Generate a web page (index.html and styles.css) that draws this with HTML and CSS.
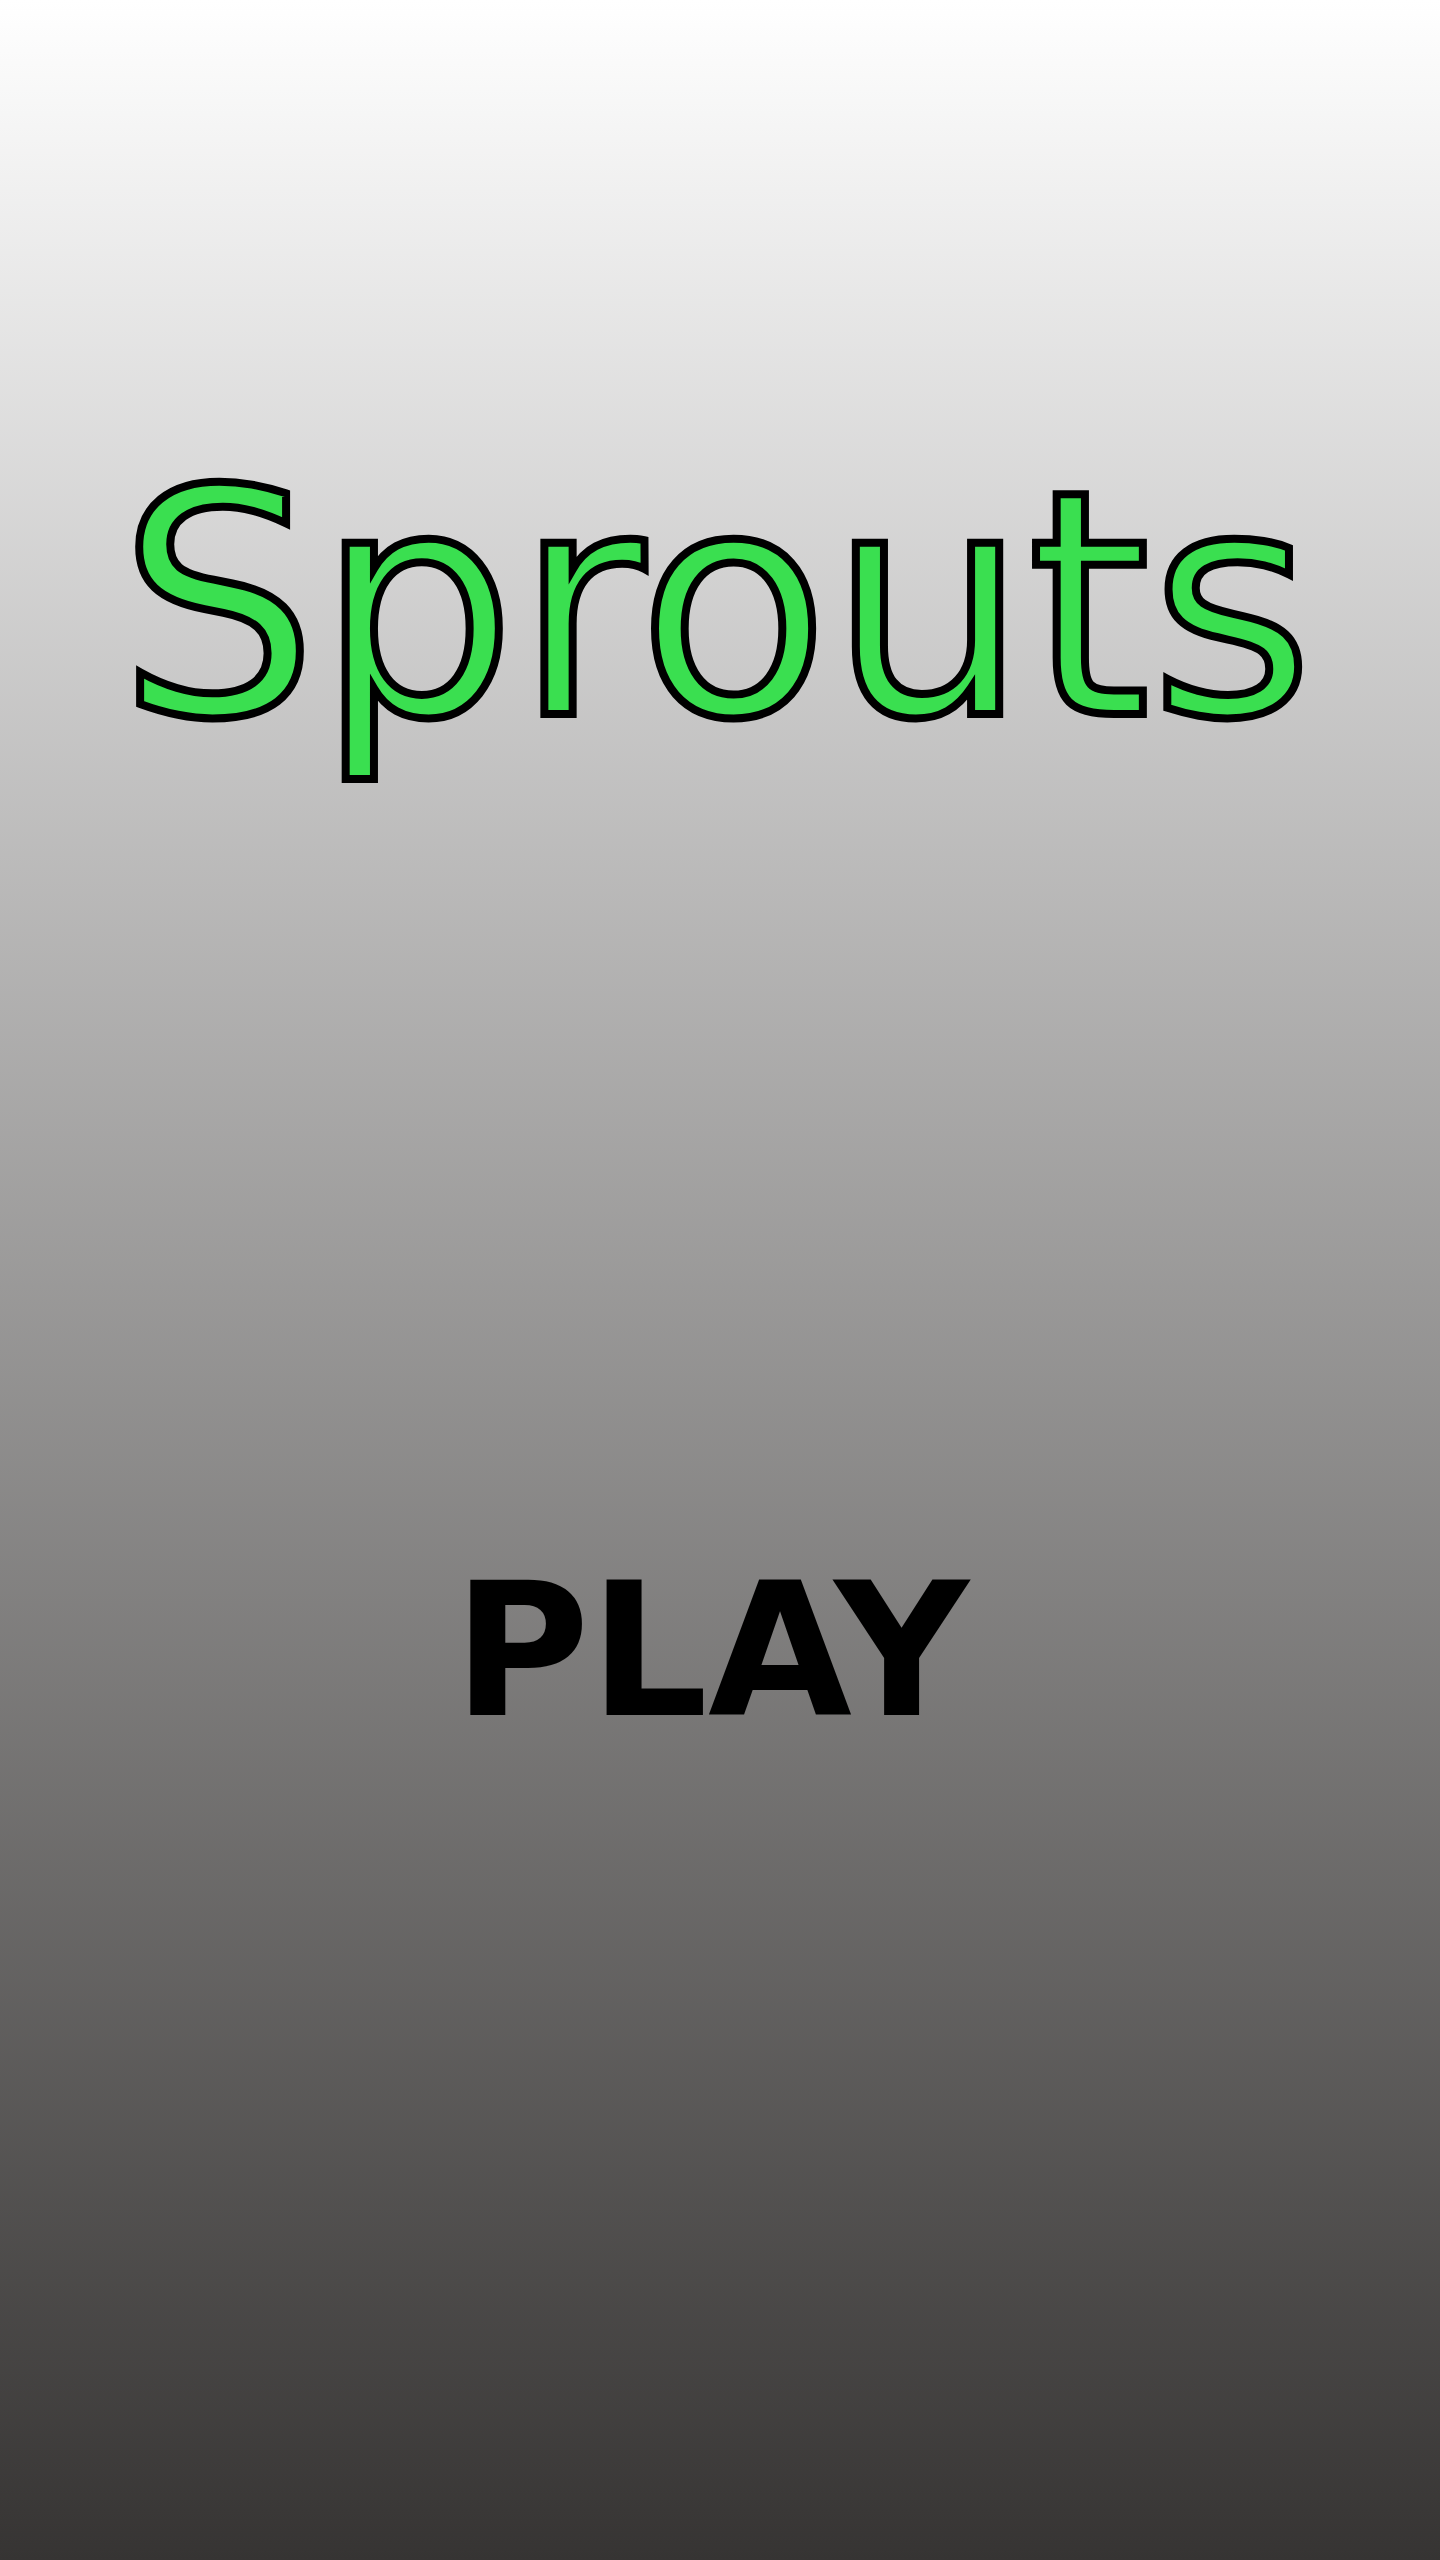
FILE: index.html
```html
<!DOCTYPE html>
<html lang="en">
<head>
<meta charset="utf-8">
<title>Sprouts</title>
<link rel="stylesheet" href="styles.css">
</head>
<body>
<main class="screen">
  <h1 class="title">Sprouts</h1>
  <button class="play" type="button">PLAY</button>
</main>
</body>
</html>
```
FILE: styles.css
```css
html, body {
  margin: 0;
  padding: 0;
}
body {
  width: 1440px;
  height: 2560px;
  background: linear-gradient(to bottom, #ffffff 0%, #363433 100%);
  font-family: "DejaVu Sans", Verdana, sans-serif;
}
.screen {
  display: flex;
  flex-direction: column;
  align-items: center;
  padding-top: 450px;
}
.title {
  margin: 0 8px 0 0;
  font-size: 313px;
  font-weight: normal;
  line-height: 312px;
  color: #3adf50;
  -webkit-text-stroke: 8px #000;
}
.play {
  margin: 796px 18px 0 0;
  padding: 0;
  border: 0;
  background: none;
  font-family: "DejaVu Sans", Verdana, sans-serif;
  font-weight: bold;
  font-size: 186px;
  line-height: 186px;
  color: #000;
  cursor: pointer;
}
```
